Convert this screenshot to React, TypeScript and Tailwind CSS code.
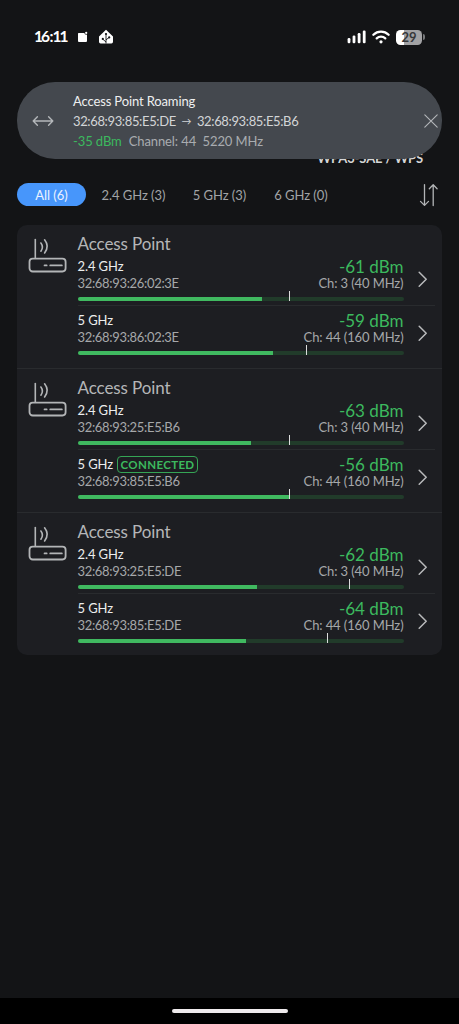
import { ReactNode } from 'react';

type Network = {
  band: string;
  mac: string;
  dbm: number;
  channel: string;
  level: number;
  peak: number;
  connected?: boolean;
};

type AccessPoint = {
  id: string;
  networks: Network[];
};

// level and peak are in percent of the bar
const accessPoints: AccessPoint[] = [
  {
    id: 'ap-1',
    networks: [
      { band: '2.4 GHz', mac: '32:68:93:26:02:3E', dbm: -61, channel: '3 (40 MHz)', level: 56.6, peak: 65 },
      { band: '5 GHz', mac: '32:68:93:86:02:3E', dbm: -59, channel: '44 (160 MHz)', level: 60, peak: 70 },
    ],
  },
  {
    id: 'ap-2',
    networks: [
      { band: '2.4 GHz', mac: '32:68:93:25:E5:B6', dbm: -63, channel: '3 (40 MHz)', level: 53.3, peak: 65 },
      { band: '5 GHz', mac: '32:68:93:85:E5:B6', dbm: -56, channel: '44 (160 MHz)', level: 65, peak: 65, connected: true },
    ],
  },
  {
    id: 'ap-3',
    networks: [
      { band: '2.4 GHz', mac: '32:68:93:25:E5:DE', dbm: -62, channel: '3 (40 MHz)', level: 55, peak: 83.4 },
      { band: '5 GHz', mac: '32:68:93:85:E5:DE', dbm: -64, channel: '44 (160 MHz)', level: 51.6, peak: 76.6 },
    ],
  },
];

function StatusBar() {
  return (
    <div className="flex h-[74px] shrink-0 items-center pl-[34px] pr-[34px] text-white">
      <span className="w-[43px] whitespace-nowrap text-[15.5px] font-bold leading-none tracking-[-2px]">
        16<span className="ml-[1.5px] mr-px">:</span>11
      </span>
      <svg width="12" height="12" viewBox="0 0 12 12" className="block">
        <path d="M1.5 2h5.8a2.2 2.2 0 0 0 2.7 1.5V10a1 1 0 0 1-1 1H2a1 1 0 0 1-1-1V2.5z" fill="#fff" />
        <circle cx="9.2" cy="1.9" r="1.1" fill="#fff" />
      </svg>
      <svg width="16" height="16" viewBox="0 0 16 16" className="ml-[9px] block">
        <path d="M8 .8 15 7.6v5.2a1.6 1.6 0 0 1-1.6 1.6H2.6A1.6 1.6 0 0 1 1 12.8V7.6z" fill="#fff" />
        <g stroke="#131416" strokeWidth="0.9" fill="none">
          <path d="M8 4.5v10M8 13 4.6 10M8 10.8l3.2-2.4" />
        </g>
        <circle cx="8" cy="5" r="1.1" fill="#131416" />
        <circle cx="4.8" cy="9.9" r="1.1" fill="#131416" />
        <circle cx="11.2" cy="8.4" r="1.1" fill="#131416" />
      </svg>
      <div className="ml-auto flex items-center">
        <svg width="20" height="14" viewBox="0 0 20 14" className="block">
          <g fill="#fff">
            <rect x="0.6" y="8" width="2.8" height="5.2" rx="1.2" />
            <rect x="5.6" y="5.6" width="2.8" height="7.6" rx="1.2" />
            <rect x="10.7" y="3.1" width="2.8" height="10.1" rx="1.2" />
            <rect x="15.8" y="0.6" width="2.8" height="12.6" rx="1.2" />
          </g>
        </svg>
        <svg width="18" height="14" viewBox="0 0 18 14" className="ml-[5px] block">
          <g fill="none" stroke="#fff" strokeWidth="2.3" strokeLinecap="round">
            <path d="M1.4 4.8a10.8 10.8 0 0 1 15.2 0" />
            <path d="M4.7 8.4a6.1 6.1 0 0 1 8.6 0" />
          </g>
          <circle cx="9" cy="11.8" r="1.6" fill="#fff" />
        </svg>
        <div className="ml-[6px] flex h-[15px] w-[26px] items-center justify-center rounded-[4.5px] bg-[linear-gradient(90deg,#fff_0_29%,#a2a2a4_29%)] pt-px text-[13px] font-bold leading-none text-[#37383a]">
          29
        </div>
        <div className="ml-px h-[6px] w-[2px] rounded-r-full bg-[#77787a]" />
      </div>
    </div>
  );
}

function RoamingBanner() {
  return (
    <div className="absolute left-[17px] top-[82px] flex h-[77px] w-[425px] items-center rounded-[38px] bg-[#44484e]">
      <svg width="22" height="12" viewBox="0 0 22 12" className="ml-[15px] block shrink-0">
        <path d="M1.2 6h19.6M5.4 1.8 1.2 6l4.2 4.2M16.6 1.8 20.8 6l-4.2 4.2" fill="none" stroke="#b4b7ba" strokeWidth="1.4" strokeLinecap="round" strokeLinejoin="round" />
      </svg>
      <div className="ml-[19px] flex-1 whitespace-nowrap pt-px text-[13px] leading-[20.3px]">
        <div className="tracking-[-0.13px] text-[#eeeff0]">Access Point Roaming</div>
        <div className="flex tracking-[-0.36px] text-[#d3d5d7]">
          <span>32:68:93:85:E5:DE</span>
          <span className="w-[21px] text-center text-[10px]">→</span>
          <span>32:68:93:85:E5:B6</span>
        </div>
        <div className="flex gap-[7px] tracking-[-0.1px] text-[#a9acb0]">
          <span className="text-[#3cb95e]">-35 dBm</span>
          <span>Channel: 44&nbsp; 5220 MHz</span>
        </div>
      </div>
      <svg width="14" height="14" viewBox="0 0 14 14" className="mr-[4px] block shrink-0">
        <path d="M.8.8l12.4 12.4M13.2.8.8 13.2" stroke="#b4b7ba" strokeWidth="1.1" strokeLinecap="round" />
      </svg>
    </div>
  );
}

function FilterTab({ active, className, children }: { active?: boolean; className: string; children: ReactNode }) {
  return (
    <button
      className={`${className} flex h-[23px] items-center justify-center whitespace-nowrap rounded-full pt-px text-[13px] leading-none tracking-[-0.05px] ${
        active ? 'bg-[#4796fb] text-[#eaf3ff]' : 'text-[#a2a4a7]'
      }`}
    >
      {children}
    </button>
  );
}

function RouterIcon() {
  return (
    <svg width="40" height="36" viewBox="0 0 40 36" className="block">
      <g fill="none" stroke="#b3b5b7" strokeLinecap="round">
        <rect x="1.5" y="21.6" width="36.1" height="12.9" rx="3.2" strokeWidth="1.8" />
        <path d="M7.3 2.6v18.6" strokeWidth="1.6" />
        <path d="M12.9 6q3 4.1 0 8.2M16.6 2.8q5.2 6.6 0 13.2" strokeWidth="1.6" />
        <path d="M16.5 28.4h2.2M22.2 28.4h11.7" strokeWidth="1.7" />
      </g>
    </svg>
  );
}

function NetworkRow({ network }: { network: Network }) {
  return (
    <div className="flex h-[54px] items-center">
      <div className="flex h-full w-[326px] flex-col pt-[6px]">
        <div className="flex justify-between">
          <div className="whitespace-nowrap text-[13px]">
            <div className="flex h-[17px] items-center tracking-[-0.1px] text-[#eceded]">
              <span>{network.band}</span>
              {network.connected && (
                <span className="ml-[4px] flex h-[17px] w-[81px] items-center justify-center rounded-[4px] border border-[#35a555] text-[11.5px] font-bold leading-none tracking-[0.35px] text-[#3cb95e]">
                  CONNECTED
                </span>
              )}
            </div>
            <div className="h-[16px] leading-[16px] tracking-[-0.32px] text-[#a6a8aa]">{network.mac}</div>
          </div>
          <div className="whitespace-nowrap text-right">
            <div className="h-[17px] text-[17px] leading-[17px] text-[#3cb95e]">{network.dbm} dBm</div>
            <div className="h-[16px] text-[13px] leading-[16px] tracking-[-0.1px] text-[#a6a8aa]">Ch: {network.channel}</div>
          </div>
        </div>
        <div className="relative mt-[6px] h-[4px] rounded-full bg-[#213b2a]">
          <div className="h-full rounded-l-full bg-[#40b960]" style={{ width: `${network.level}%` }} />
          <div className="absolute bottom-0 h-[10px] w-px bg-[#dcdddd]" style={{ left: `${network.peak}%` }} />
        </div>
      </div>
      <svg width="10" height="16" viewBox="0 0 10 16" className="ml-[14px] block">
        <path d="M1.2 1.2l7 7-7 7" fill="none" stroke="#b9babc" strokeWidth="1.5" strokeLinecap="round" strokeLinejoin="round" />
      </svg>
    </div>
  );
}

function AccessPointGroup({ accessPoint }: { accessPoint: AccessPoint }) {
  return (
    <div className="flex h-[144px] border-b border-[#292b2e] last:h-[142px] last:border-b-0">
      <div className="w-[60.5px] shrink-0 pl-[11px] pt-[12px]">
        <RouterIcon />
      </div>
      <div className="w-[357px]">
        <h2 className="h-[27px] text-[17px] leading-[37px] tracking-[-0.1px] text-[#b5b6b8]">Access Point</h2>
        <div className="divide-y divide-[#292b2e]">
          {accessPoint.networks.map((network) => (
            <NetworkRow key={network.mac} network={network} />
          ))}
        </div>
      </div>
    </div>
  );
}

export default function App() {
  return (
    <div className="relative flex h-[1024px] w-[459px] flex-col overflow-hidden bg-[#131416] font-['Lato','DejaVu_Sans',sans-serif]">
      <StatusBar />
      <div className="flex h-[109px] flex-col items-end justify-end pb-[17px] pr-[36px]">
        <span className="text-[13px] font-bold leading-[15px] tracking-[-0.1px] text-[#d5d6d7]">WPA3-SAE / WPS</span>
      </div>
      <div className="flex h-[23px] items-center pl-[17px] pr-[20px]">
        <FilterTab active className="w-[69px]">All (6)</FilterTab>
        <FilterTab className="ml-[15px] w-[65px]">2.4 GHz (3)</FilterTab>
        <FilterTab className="ml-[27px] w-[53px]">5 GHz (3)</FilterTab>
        <FilterTab className="ml-[28px] w-[54px]">6 GHz (0)</FilterTab>
        <svg width="20" height="24" viewBox="0 0 20 24" className="ml-auto block">
          <g fill="none" stroke="#b3b5b7" strokeWidth="1.3" strokeLinecap="round" strokeLinejoin="round">
            <path d="M5.5 1.6v20.6M1.5 18.4l4 4 4-4" />
            <path d="M14.2 22.6V1.9M10.3 5.8l3.9-4 3.9 4" />
          </g>
        </svg>
      </div>
      <div className="mx-[17px] mt-[19px] rounded-[10px] bg-[#1d1e22]">
        {accessPoints.map((accessPoint) => (
          <AccessPointGroup key={accessPoint.id} accessPoint={accessPoint} />
        ))}
      </div>
      <div className="mt-auto flex h-[26px] justify-center bg-black pt-[11px]">
        <div className="h-[4px] w-[116px] rounded-full bg-[#eeeaec]" />
      </div>
      <RoamingBanner />
    </div>
  );
}
